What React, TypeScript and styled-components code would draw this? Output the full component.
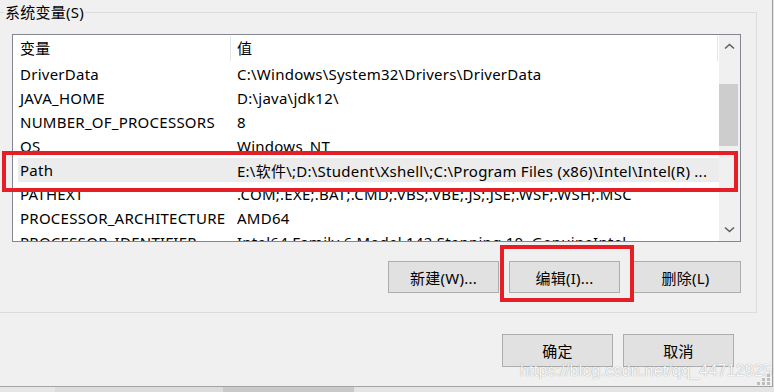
import React from 'react';
import styled, { createGlobalStyle } from 'styled-components';

const GlobalStyle = createGlobalStyle`
    html, body {
        margin: 0;
        padding: 0;
        background: #e2e2e2;
    }
    body {
        font-family: "Noto Sans", "Noto Sans CJK SC", sans-serif;
    }
`;

interface EnvVar {
    name: string;
    value: string;
    selected?: boolean;
}

const variables: EnvVar[] = [
    { name: 'DriverData', value: 'C:\\Windows\\System32\\Drivers\\DriverData' },
    { name: 'JAVA_HOME', value: 'D:\\java\\jdk12\\' },
    { name: 'NUMBER_OF_PROCESSORS', value: '8' },
    { name: 'OS', value: 'Windows_NT' },
    {
        name: 'Path',
        value: 'E:\\软件\\;D:\\Student\\Xshell\\;C:\\Program Files (x86)\\Intel\\Intel(R) ...',
        selected: true
    },
    { name: 'PATHEXT', value: '.COM;.EXE;.BAT;.CMD;.VBS;.VBE;.JS;.JSE;.WSF;.WSH;.MSC' },
    { name: 'PROCESSOR_ARCHITECTURE', value: 'AMD64' },
    { name: 'PROCESSOR_IDENTIFIER', value: 'Intel64 Family 6 Model 142 Stepping 10, GenuineIntel' }
];

const Screen = styled.div`
    width: 774px;
    height: 392px;
    overflow: hidden;
    display: flex;
    flex-direction: column;
    background: #e2e2e2;
`;

const Window = styled.div`
    position: relative;
    box-sizing: border-box;
    width: 773px;
    height: 387px;
    flex-shrink: 0;
    display: flex;
    flex-direction: column;
    background: #f0f0f0;
    border-right: 1px solid #a0a0a0;
    border-bottom: 1px solid #a4a4a4;
    font-size: 15px;
    letter-spacing: 0.25px;
    color: #000;
`;

const GroupBox = styled.fieldset`
    margin: 4px 15px 0 -4px;
    padding: 14px 15px 19px 15px;
    border: 1px solid #dcdcdc;
    min-width: 0;
    display: flex;
    flex-direction: column;
`;

const Legend = styled.legend`
    margin-left: -8px;
    padding: 0 1px;
    font-size: 15px;
    line-height: 16px;
`;

const ListView = styled.div`
    box-sizing: border-box;
    height: 208px;
    display: flex;
    border: 1px solid #828790;
    background: #fff;
    margin-bottom: 19px;
`;

const ListContent = styled.div`
    flex: 1;
    min-width: 0;
    display: flex;
    flex-direction: column;
    overflow: hidden;
`;

const Header = styled.div`
    display: flex;
    align-items: center;
    height: 27px;
    flex-shrink: 0;
`;

const HeaderCell = styled.div<{ $width?: number; $pad: number }>`
    box-sizing: border-box;
    width: ${(p) => (p.$width ? `${p.$width}px` : 'auto')};
    flex: ${(p) => (p.$width ? 'none' : '1')};
    padding-left: ${(p) => p.$pad}px;
    line-height: 27px;
    white-space: nowrap;
`;

const HeaderDivider = styled.div`
    width: 1px;
    height: 25px;
    background: #e5e5e5;
    flex-shrink: 0;
`;

const Row = styled.div<{ $selected?: boolean }>`
    display: flex;
    align-items: center;
    height: 24px;
    flex-shrink: 0;
    margin-left: 5px;
    background: ${(p) => (p.$selected ? '#ececec' : 'transparent')};
`;

const NameCell = styled.div`
    box-sizing: border-box;
    width: 219px;
    flex-shrink: 0;
    padding-left: 2px;
    white-space: nowrap;
    overflow: hidden;
`;

const ValueCell = styled.div`
    flex: 1;
    min-width: 0;
    white-space: nowrap;
    overflow: hidden;
`;

const ScrollBar = styled.div`
    width: 21px;
    flex-shrink: 0;
    display: flex;
    flex-direction: column;
    background: #f0f0f0;
`;

const ScrollArrow = styled.div`
    height: 23px;
    display: flex;
    align-items: center;
    justify-content: center;
    flex-shrink: 0;
`;

const Track = styled.div`
    flex: 1;
`;

const Thumb = styled.div`
    margin-top: 26px;
    width: 19px;
    height: 62px;
    background: #cdcdcd;
`;

const ButtonRow = styled.div`
    display: flex;
    justify-content: flex-end;
    gap: 10px;
`;

const WinButton = styled.button<{ $tall?: boolean }>`
    box-sizing: border-box;
    width: 111px;
    height: ${(p) => (p.$tall ? 33 : 32)}px;
    padding: 0;
    background: #e1e1e1;
    border: 1px solid #adadad;
    font-family: inherit;
    font-size: 15px;
    letter-spacing: inherit;
    color: #000;
`;

const DialogRow = styled(ButtonRow)`
    margin-top: 21px;
    padding-right: 38px;
`;

const RedFrame = styled.div<{ $x: number; $y: number; $w: number; $h: number }>`
    position: absolute;
    left: ${(p) => p.$x}px;
    top: ${(p) => p.$y}px;
    width: ${(p) => p.$w}px;
    height: ${(p) => p.$h}px;
    box-sizing: border-box;
    border: 4px solid #e61e25;
    pointer-events: none;
`;

const Watermark = styled.div`
    position: absolute;
    left: 520px;
    top: 362px;
    font-family: "Liberation Sans", Arial, sans-serif;
    font-size: 16px;
    letter-spacing: 0.2px;
    color: rgba(255, 255, 255, 0.95);
    text-shadow: 0 0 1px rgba(90, 90, 90, 0.7);
    white-space: nowrap;
`;

const Grip = styled.svg`
    position: absolute;
    right: 2px;
    bottom: 1px;
`;

const BottomStrip = styled.div`
    flex: 1;
    display: flex;
    overflow: hidden;
`;

const StripTab = styled.div<{ $w: number; $bg: string }>`
    width: ${(p) => p.$w}px;
    flex-shrink: 0;
    background: ${(p) => p.$bg};
    font-size: 15px;
    line-height: 15px;
    text-align: center;
    overflow: hidden;
    color: #000;
`;

const Chevron: React.FC<{ down?: boolean }> = ({ down }) => (
    <svg width="11" height="7" viewBox="0 0 11 7">
        <path
            d={down ? 'M1 1.5 L5.5 5.5 L10 1.5' : 'M1 5.5 L5.5 1.5 L10 5.5'}
            fill="none"
            stroke="#606060"
            strokeWidth="1.6"
        />
    </svg>
);

export default function App() {
    return (
        <Screen>
            <GlobalStyle />
            <Window>
                <GroupBox>
                    <Legend>系统变量(S)</Legend>
                    <ListView>
                        <ListContent>
                            <Header>
                                <HeaderCell $width={217} $pad={7}>
                                    变量
                                </HeaderCell>
                                <HeaderDivider />
                                <HeaderCell $width={486} $pad={6}>
                                    值
                                </HeaderCell>
                                <HeaderDivider />
                                <HeaderCell $pad={0} />
                            </Header>
                            {variables.map((v) => (
                                <Row key={v.name} $selected={v.selected}>
                                    <NameCell>{v.name}</NameCell>
                                    <ValueCell>{v.value}</ValueCell>
                                </Row>
                            ))}
                        </ListContent>
                        <ScrollBar>
                            <ScrollArrow>
                                <Chevron />
                            </ScrollArrow>
                            <Track>
                                <Thumb />
                            </Track>
                            <ScrollArrow>
                                <Chevron down />
                            </ScrollArrow>
                        </ScrollBar>
                    </ListView>
                    <ButtonRow>
                        <WinButton>新建(W)...</WinButton>
                        <WinButton>编辑(I)...</WinButton>
                        <WinButton>删除(L)</WinButton>
                    </ButtonRow>
                </GroupBox>
                <DialogRow>
                    <WinButton $tall>确定</WinButton>
                    <WinButton $tall>取消</WinButton>
                </DialogRow>

                <RedFrame $x={2} $y={151} $w={736} $h={41} />
                <RedFrame $x={500} $y={245} $w={134} $h={57} />
                <Watermark>https://blog.csdn.net/qq_44712925</Watermark>
                <Grip width="14" height="11" viewBox="0 0 14 11">
                    <g fill="#bdbdbd">
                        <rect x="11" y="0" width="3" height="3" />
                        <rect x="6" y="4" width="3" height="3" />
                        <rect x="11" y="4" width="3" height="3" />
                        <rect x="1" y="8" width="3" height="3" />
                        <rect x="6" y="8" width="3" height="3" />
                        <rect x="11" y="8" width="3" height="3" />
                    </g>
                </Grip>
            </Window>
            <BottomStrip>
                <StripTab $w={55} $bg="#e6e6e6" />
                <StripTab $w={168} $bg="#dcdcdc">
                    page
                </StripTab>
                <StripTab $w={131} $bg="#c9c9c9">
                    page
                </StripTab>
                <StripTab $w={420} $bg="#e4e4e4" />
            </BottomStrip>
        </Screen>
    );
}
